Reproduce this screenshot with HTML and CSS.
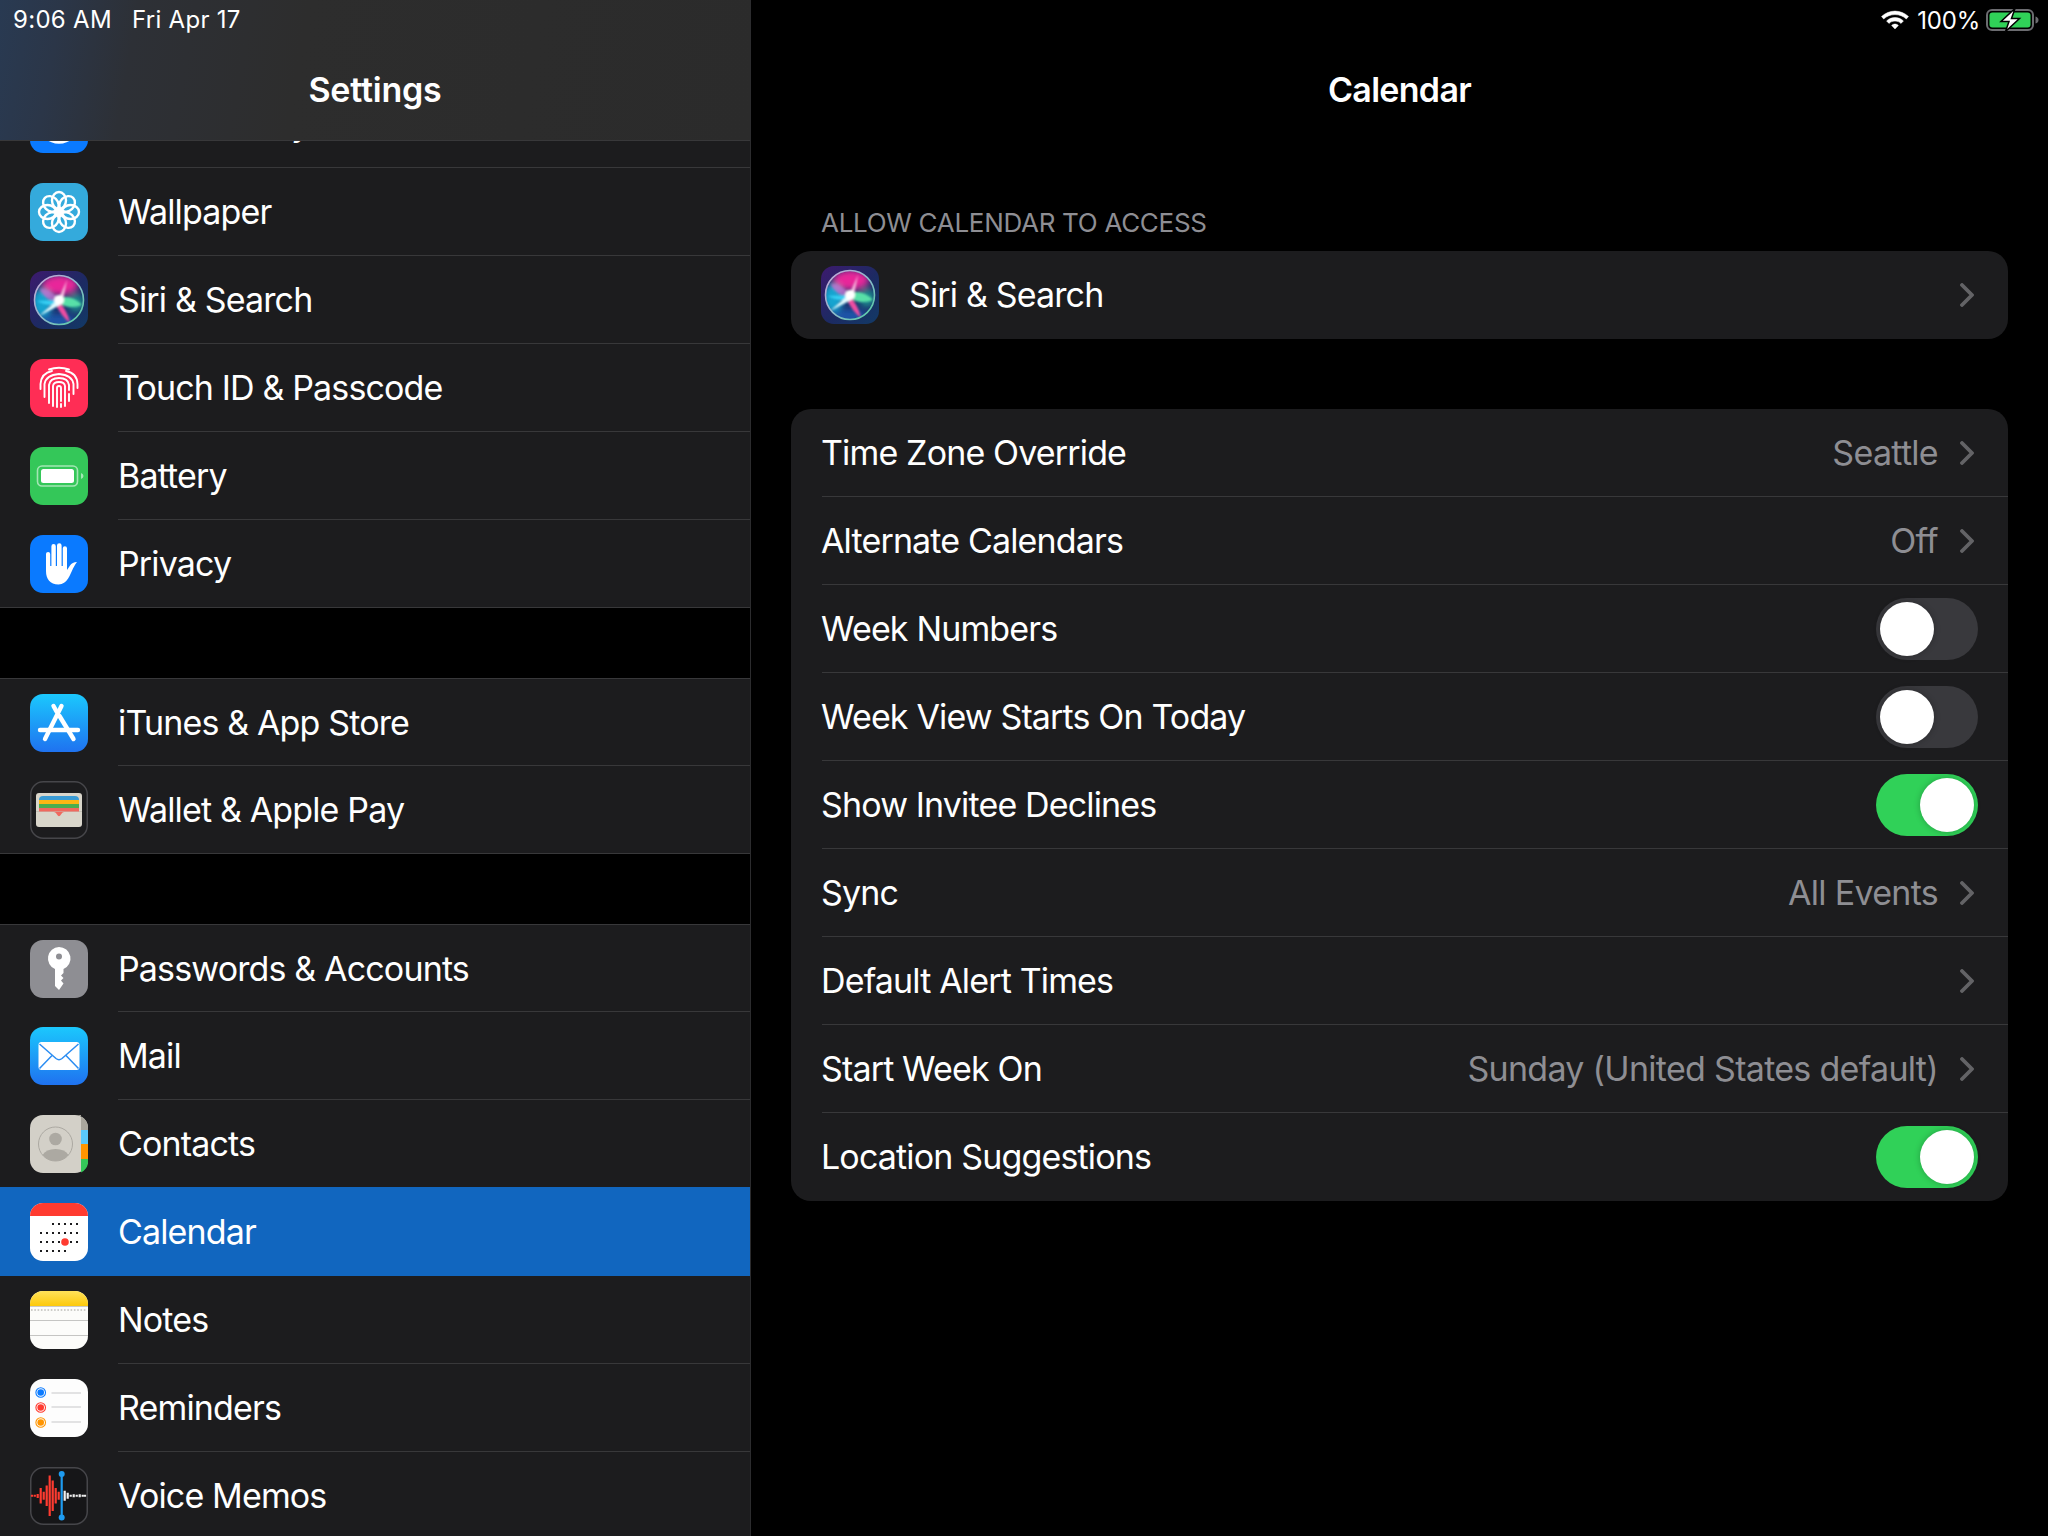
FILE: index.html
```html
<!DOCTYPE html>
<html lang="en">
<head>
<meta charset="utf-8">
<title>Settings - Calendar</title>
<link rel="stylesheet" href="styles.css">
</head>
<body>
<svg class="defs" width="0" height="0" aria-hidden="true">
  <defs>
    <linearGradient id="siriBg" x1="0" y1="0" x2="1" y2="1">
      <stop offset="0" stop-color="#3d1a6e"/><stop offset=".55" stop-color="#1c2a62"/><stop offset="1" stop-color="#123a66"/>
    </linearGradient>
    <linearGradient id="siriRing" x1="0" y1="0" x2="1" y2="1">
      <stop offset="0" stop-color="#c9a4d8"/><stop offset=".5" stop-color="#8fb8cc"/><stop offset="1" stop-color="#4fd0a0"/>
    </linearGradient>
    <filter id="soft" x="-40%" y="-40%" width="180%" height="180%"><feGaussianBlur stdDeviation="3"/></filter>
    <filter id="softer" x="-40%" y="-40%" width="180%" height="180%"><feGaussianBlur stdDeviation="1"/></filter>
    <clipPath id="siriClip"><circle cx="29" cy="29" r="24.500"/></clipPath>
    <linearGradient id="appstore" x1="0" y1="0" x2="0" y2="1">
      <stop offset="0" stop-color="#1bc8fd"/><stop offset="1" stop-color="#1f72f0"/>
    </linearGradient>
    <linearGradient id="notesTop" x1="0" y1="0" x2="0" y2="1">
      <stop offset="0" stop-color="#ffe25a"/><stop offset="1" stop-color="#fdc90a"/>
    </linearGradient>
    <symbol id="siri" viewBox="0 0 58 58">
      <rect width="58" height="58" rx="13" fill="url(#siriBg)"/>
      <circle cx="29" cy="29" r="24.500" fill="#1a2f6c"/>
      <g clip-path="url(#siriClip)">
        <g filter="url(#soft)">
          <ellipse cx="30" cy="14" rx="18" ry="10" fill="#e8289a"/>
          <ellipse cx="12" cy="32" rx="10" ry="14" fill="#18a4d0"/>
          <ellipse cx="28" cy="50" rx="17" ry="7" fill="#1c55a8"/>
          <ellipse cx="46" cy="32" rx="8" ry="9" fill="#1c8c8c"/>
        </g>
        <g filter="url(#softer)">
          <path d="M29 27Q17 17 10 18Q15 30 28 31Z" fill="#c070d0" opacity=".75"/>
          <path d="M28 27Q42 23 52 34Q40 39 28 32Z" fill="#58e0a8"/>
          <path d="M27 28Q37 38 40 52Q31 45 25 32Z" fill="#ee4ea2"/>
          <path d="M27 31L37 9L33 29Z" fill="#f4b8dc"/>
          <path d="M30 26L29 29L7 30Q20 37 30 32Z" fill="#38d0f4"/>
          <path d="M33 24L9 45L30 34Z" fill="#e2fcff"/>
          <circle cx="29" cy="29" r="5" fill="#fff"/>
        </g>
      </g>
      <circle cx="29" cy="29" r="24.500" fill="none" stroke="url(#siriRing)" stroke-width="1.600"/>
    </symbol>
  </defs>
</svg>

<main class="screen">
  <aside class="sidebar">
    <header class="side-head">
      <div class="status-left"><span>9:06 AM</span><span>Fri Apr 17</span></div>
      <h1 class="nav-title">Settings</h1>
    </header>
    <div class="side-scroll">
      <ul class="group group-first">
        <li class="item">
          <svg class="icon" viewBox="0 0 58 58"><rect width="58" height="58" rx="13" fill="#0a7aff"/><circle cx="29" cy="29" r="18" fill="none" stroke="#fff" stroke-width="3.500"/></svg>
          <span class="item-label">Accessibility</span>
        </li>
        <li class="item">
          <svg class="icon" viewBox="0 0 58 58"><rect width="58" height="58" rx="13" fill="#34aadc"/>
            <g fill="none" stroke="#fff" stroke-width="2.400">
              <g>
                <ellipse cx="29" cy="17.500" rx="7" ry="8.500"/><ellipse cx="29" cy="40.500" rx="7" ry="8.500"/>
                <ellipse cx="17.500" cy="29" rx="8.500" ry="7"/><ellipse cx="40.500" cy="29" rx="8.500" ry="7"/>
              </g>
              <g transform="rotate(45 29 29)">
                <ellipse cx="29" cy="17.500" rx="7" ry="8.500"/><ellipse cx="29" cy="40.500" rx="7" ry="8.500"/>
                <ellipse cx="17.500" cy="29" rx="8.500" ry="7"/><ellipse cx="40.500" cy="29" rx="8.500" ry="7"/>
              </g>
            </g>
            <circle cx="29" cy="29" r="3.600" fill="#fff"/></svg>
          <span class="item-label">Wallpaper</span>
        </li>
        <li class="item">
          <svg class="icon"><use href="#siri"/></svg>
          <span class="item-label">Siri &amp; Search</span>
        </li>
        <li class="item">
          <svg class="icon" viewBox="0 0 58 58"><rect width="58" height="58" rx="13" fill="#ff2d55"/>
            <g fill="none" stroke="#fff" stroke-width="1.900" stroke-linecap="round">
              <path d="M19 10.500Q29 7 39 10.500"/>
              <path d="M10.500 30V25Q11.500 14 22 12M36 12Q47 14 47.500 25V29"/>
              <path d="M14.500 38V25Q16 16 29 15Q42 16 43.500 25V35"/>
              <path d="M19 44V26Q20 19 29 19Q38 19 39 26V31M39 35V42"/>
              <path d="M23 47V27Q23.500 23 29 23Q34.500 23 35 27V47"/>
              <path d="M27 48V29Q27 27 29 27Q31 27 31 29V42M31 45V48"/>
            </g></svg>
          <span class="item-label">Touch ID &amp; Passcode</span>
        </li>
        <li class="item">
          <svg class="icon" viewBox="0 0 58 58"><rect width="58" height="58" rx="13" fill="#34c759"/>
            <rect x="7.500" y="19" width="40" height="20" rx="4.500" fill="none" stroke="#fff" stroke-opacity=".55" stroke-width="1.600"/>
            <rect x="11" y="22" width="33" height="14" rx="2.500" fill="#fff"/>
            <path d="M51 26Q53.500 27 53.500 29Q53.500 31 51 32Z" fill="#fff" fill-opacity=".55"/></svg>
          <span class="item-label">Battery</span>
        </li>
        <li class="item">
          <svg class="icon" viewBox="0 0 58 58"><rect width="58" height="58" rx="13" fill="#0a7aff"/>
            <path d="M16 19a2.100 2.100 0 0 1 4.200 0V31h1.200V11.300a2.200 2.200 0 0 1 4.400 0V31H27V10.600a2.300 2.300 0 0 1 4.600 0V31h1.200V13.300a2.100 2.100 0 0 1 4.200 0V35l3-4.500c1.500-2.200 3.800-3.500 7-3.500-.8 1.200-2.500 3.500-4 6.500-3 6-5.500 16-14.500 16C20 49.500 16 44 16 36Z" fill="#fff"/></svg>
          <span class="item-label">Privacy</span>
        </li>
      </ul>

      <ul class="group">
        <li class="item">
          <svg class="icon" viewBox="0 0 58 58"><rect width="58" height="58" rx="13" fill="url(#appstore)"/>
            <g stroke="#fff" stroke-width="4.400" stroke-linecap="round" fill="none">
              <path d="M31.500 12L15 45"/><path d="M29.500 22L43.500 45"/><path d="M23.500 12L26.500 17.500"/><path d="M10 36H48"/>
            </g></svg>
          <span class="item-label">iTunes &amp; App Store</span>
        </li>
        <li class="item">
          <svg class="icon" viewBox="0 0 58 58"><rect x=".75" y=".75" width="56.500" height="56.500" rx="12.500" fill="#1c1c1e" stroke="#46464a" stroke-width="1.500"/>
            <rect x="6" y="12" width="46" height="34" rx="3" fill="#d9d6cb"/>
            <path d="M9 19a4 4 0 0 1 4-4H45a4 4 0 0 1 4 4v2H9Z" fill="#3a9bd4"/>
            <rect x="9" y="19" width="40" height="5" fill="#fdb714"/>
            <rect x="9" y="23" width="40" height="5" fill="#4cae4f"/>
            <rect x="9" y="27" width="40" height="4" fill="#f0695f"/>
            <path d="M6 30H52V31H6Z" fill="#c4c1b6"/>
            <path d="M9 30.500H49V31H34Q32 31 31 33.500Q29 37 27 33.500Q26 31 24 31H9Z" fill="#f0695f"/></svg>
          <span class="item-label">Wallet &amp; Apple Pay</span>
        </li>
      </ul>

      <ul class="group">
        <li class="item">
          <svg class="icon" viewBox="0 0 58 58"><rect width="58" height="58" rx="13" fill="#8e8e93"/>
            <path d="M29 7a11.500 11.500 0 0 1 4.500 22.100V33l-2.500 2.500 2.500 2.500-2.500 2.500 2.500 3-4.500 6.500-4-4V29.100A11.500 11.500 0 0 1 29 7Z" fill="#fff"/>
            <circle cx="29" cy="16.500" r="3" fill="#8e8e93"/></svg>
          <span class="item-label">Passwords &amp; Accounts</span>
        </li>
        <li class="item">
          <svg class="icon" viewBox="0 0 58 58"><rect width="58" height="58" rx="13" fill="url(#appstore)"/>
            <rect x="8.500" y="15" width="41" height="28" rx="3" fill="#fff"/>
            <path d="M9.500 17L26 31.500Q29 34 32 31.500L48.500 17M9.500 41.500L22.500 28M48.500 41.500L35.500 28" fill="none" stroke="#2b8df2" stroke-width="1.500"/></svg>
          <span class="item-label">Mail</span>
        </li>
        <li class="item">
          <svg class="icon" viewBox="0 0 58 58"><rect width="58" height="58" rx="13" fill="#d3d0c8"/>
            <path d="M51 0H45A13 13 0 0 1 58 13V15H51Z" fill="#a9a69d"/>
            <rect x="51" y="15" width="7" height="14" fill="#5ac8fa"/>
            <rect x="51" y="29" width="7" height="15" fill="#ff9500"/>
            <path d="M51 44H58V45A13 13 0 0 1 51 57.500Z" fill="#34c759"/>
            <circle cx="25.500" cy="29" r="17" fill="none" stroke="#aca9a2" stroke-width="1"/>
            <circle cx="25.500" cy="24" r="6.300" fill="#aca9a2"/>
            <path d="M12.500 40Q16 34 25.500 34Q35 34 38.500 40A17 17 0 0 1 12.500 40Z" fill="#aca9a2"/></svg>
          <span class="item-label">Contacts</span>
        </li>
        <li class="item item-selected">
          <svg class="icon" viewBox="0 0 58 58"><rect width="58" height="58" rx="13" fill="#fff"/>
            <path d="M13 0H45A13 13 0 0 1 58 13V13H0V13A13 13 0 0 1 13 0Z" fill="#ff3b30"/>
            <g fill="#1c1c1e">
              <rect x="22" y="20" width="2" height="2"/><rect x="28" y="20" width="2" height="2"/><rect x="34" y="20" width="2" height="2"/><rect x="40" y="20" width="2" height="2"/><rect x="46" y="20" width="2" height="2"/>
              <rect x="10" y="29" width="2" height="2"/><rect x="16" y="29" width="2" height="2"/><rect x="22" y="29" width="2" height="2"/><rect x="28" y="29" width="2" height="2"/><rect x="34" y="29" width="2" height="2"/><rect x="40" y="29" width="2" height="2"/><rect x="46" y="29" width="2" height="2"/>
              <rect x="10" y="38" width="2" height="2"/><rect x="16" y="38" width="2" height="2"/><rect x="22" y="38" width="2" height="2"/><rect x="28" y="38" width="2" height="2"/><rect x="40" y="38" width="2" height="2"/><rect x="46" y="38" width="2" height="2"/>
              <rect x="10" y="47" width="2" height="2"/><rect x="16" y="47" width="2" height="2"/><rect x="22" y="47" width="2" height="2"/><rect x="28" y="47" width="2" height="2"/><rect x="34" y="47" width="2" height="2"/>
            </g>
            <circle cx="35" cy="39" r="3.800" fill="#ff3b30"/></svg>
          <span class="item-label">Calendar</span>
        </li>
        <li class="item">
          <svg class="icon" viewBox="0 0 58 58"><rect width="58" height="58" rx="13" fill="#fcfcfa"/>
            <path d="M13 0H45A13 13 0 0 1 58 13V15H0V13A13 13 0 0 1 13 0Z" fill="url(#notesTop)"/>
            <path d="M0 15.500H58" stroke="#c9c9c5" stroke-width="1"/>
            <path d="M1 19H57" stroke="#bdbdb9" stroke-width="1.500" stroke-dasharray="1.600 1.700"/>
            <path d="M0 29.500H58M0 44.500H58" stroke="#c5c5c3" stroke-width="1"/></svg>
          <span class="item-label">Notes</span>
        </li>
        <li class="item">
          <svg class="icon" viewBox="0 0 58 58"><rect width="58" height="58" rx="13" fill="#fdfdfd"/>
            <g fill="none" stroke-width="1.100"><circle cx="10.700" cy="13.500" r="4.800" stroke="#0a7aff"/><circle cx="10.700" cy="28.500" r="4.800" stroke="#ff3b30"/><circle cx="10.700" cy="43.500" r="4.800" stroke="#ff9500"/></g>
            <circle cx="10.700" cy="13.500" r="3.300" fill="#0a7aff"/><circle cx="10.700" cy="28.500" r="3.300" fill="#ff3b30"/><circle cx="10.700" cy="43.500" r="3.300" fill="#ff9500"/>
            <path d="M21.500 14H51M21.500 28H51M21.500 43H51" stroke="#c7c7c9" stroke-width="1"/></svg>
          <span class="item-label">Reminders</span>
        </li>
        <li class="item">
          <svg class="icon" viewBox="0 0 58 58"><rect x=".75" y=".75" width="56.500" height="56.500" rx="12.500" fill="#161618" stroke="#46464a" stroke-width="1.500"/>
            <path d="M2 27.800V29.800M4.800 27.800V29.800M7.700 27V31M10.700 21V36.500M13.700 24.700V32.800M16.700 18.500V39M19.700 8.500V49M22.700 13.500V44M25.700 21V36.500M28.700 24.700V32.800" stroke="#ff3b30" stroke-width="2.200" fill="none"/>
            <path d="M34.700 23.700V33.800M37.700 25.700V31.800M40.700 27.800V29.800M43.700 27.300V30.300M46.700 27.800V29.800M49.700 27.300V30.300M52.700 27.800V29.800M55 27.800V29.800" stroke="#f0f0f0" stroke-width="2.200" fill="none"/>
            <path d="M31.700 7V51" stroke="#1e9bf0" stroke-width="2.200"/>
            <circle cx="31.700" cy="7" r="3" fill="#1e9bf0"/><circle cx="31.700" cy="50.600" r="3" fill="#1e9bf0"/></svg>
          <span class="item-label">Voice Memos</span>
        </li>
      </ul>
    </div>
  </aside>

  <section class="detail">
    <div class="status-right">
      <svg class="wifi" viewBox="1 2.500 26 17.500"><path d="M14 3C9 3 5 5 1.500 8L3.500 10.300C6.300 7.700 10 6.200 14 6.200S21.700 7.700 24.500 10.300L26.500 8C23 5 19 3 14 3ZM14 9C11 9 8.300 10.100 6.200 12.100L8.400 14.400C9.900 13 11.800 12.200 14 12.200S18.100 13 19.600 14.400L21.800 12.100C19.700 10.100 17 9 14 9ZM14 15C12.800 15 11.700 15.500 10.900 16.300L14 19.500 17.100 16.300C16.300 15.500 15.200 15 14 15Z" fill="#fff" stroke="#fff" stroke-width=".5"/></svg>
      <span>100%</span>
      <svg class="batt" viewBox="0 0 54 24"><rect x="1" y="2" width="46" height="20" rx="5" fill="none" stroke="#6c6c70" stroke-width="2"/><rect x="3.500" y="4.500" width="41" height="15" rx="3" fill="#30d158"/><path d="M49.500 8.500Q52.500 9.500 52.500 12T49.500 15.500Z" fill="#6c6c70"/><path d="M29 0.500L15 13.500H23L19.500 23.500L33.500 10.500H25.500Z" fill="#fff" stroke="#000" stroke-width="1.500"/></svg>
    </div>
    <h2 class="nav-title detail-title">Calendar</h2>
    <h3 class="section-label">ALLOW CALENDAR TO ACCESS</h3>
    <div class="card">
      <div class="row row-icon">
        <svg class="icon"><use href="#siri"/></svg>
        <span class="row-label">Siri &amp; Search</span>
        <svg class="chev" viewBox="0 0 14 24"><path d="M2 2L12 12L2 22"/></svg>
      </div>
    </div>
    <div class="card card-main">
      <div class="row"><span class="row-label">Time Zone Override</span><span class="row-value">Seattle</span><svg class="chev" viewBox="0 0 14 24"><path d="M2 2L12 12L2 22"/></svg></div>
      <div class="row"><span class="row-label">Alternate Calendars</span><span class="row-value">Off</span><svg class="chev" viewBox="0 0 14 24"><path d="M2 2L12 12L2 22"/></svg></div>
      <div class="row"><span class="row-label">Week Numbers</span><span class="switch"></span></div>
      <div class="row"><span class="row-label">Week View Starts On Today</span><span class="switch"></span></div>
      <div class="row"><span class="row-label">Show Invitee Declines</span><span class="switch switch-on"></span></div>
      <div class="row"><span class="row-label">Sync</span><span class="row-value">All Events</span><svg class="chev" viewBox="0 0 14 24"><path d="M2 2L12 12L2 22"/></svg></div>
      <div class="row"><span class="row-label">Default Alert Times</span><svg class="chev" viewBox="0 0 14 24"><path d="M2 2L12 12L2 22"/></svg></div>
      <div class="row"><span class="row-label">Start Week On</span><span class="row-value">Sunday (United States default)</span><svg class="chev" viewBox="0 0 14 24"><path d="M2 2L12 12L2 22"/></svg></div>
      <div class="row"><span class="row-label">Location Suggestions</span><span class="switch switch-on"></span></div>
    </div>
  </section>
</main>
</body>
</html>
```

FILE: styles.css
```css
* { box-sizing: border-box; }
html, body { margin: 0; padding: 0; background: #000; }
body { font-family: Inter, "Liberation Sans", sans-serif; color: #fff; }
.defs { position: absolute; }

.screen { display: flex; width: 2048px; height: 1536px; overflow: hidden; background: #000; }

/* Sidebar */
.sidebar { position: relative; flex: 0 0 751px; height: 1536px; overflow: hidden; border-right: 1px solid #2c2c2e; }
.side-head {
  position: absolute; top: 0; left: 0; right: 0; height: 141px; z-index: 2;
  background: linear-gradient(100deg, #293a52 0, #2b3648 8%, #2d3036 18%, #2d2d2d 40%, #2b2b2b 100%);
  border-bottom: 1px solid #38383a;
}
.status-left { display: flex; gap: 20px; padding: 7px 0 0 13px; font-size: 24px; line-height: 26px; letter-spacing: .3px; }
.nav-title { margin: 0; font-size: 34px; line-height: 42px; font-weight: 600; text-align: center; letter-spacing: -.7px; }
.side-head .nav-title { margin-top: 36px; letter-spacing: -.2px; }
.side-scroll { padding-top: 80px; }
.group { list-style: none; margin: 0 0 70px; padding: 0; background: #1c1c1e; border-top: 1px solid #38383a; }
.group-first { border-top: 0; }
.item { position: relative; display: flex; align-items: center; gap: 30px; height: 88px; padding-left: 30px; }
.item::after { content: ""; position: absolute; bottom: 0; left: 118px; right: 0; height: 1px; background: #38383a; }
.item:last-child::after { left: 0; }
.group:not(.group-first) .item:first-child { height: 87px; }
.item-selected { height: 89px; margin-top: -1px; background: #1166bf; }
.item-selected::after { display: none; }
.icon { flex: 0 0 58px; width: 58px; height: 58px; display: block; }
.item-label, .row-label { font-size: 34px; line-height: 42px; letter-spacing: -.85px; white-space: nowrap; }

/* Detail */
.detail { flex: 1; position: relative; padding: 69px 40px 0; }
.status-right { position: absolute; top: 7px; right: 8px; display: flex; align-items: center; gap: 8px; height: 26px; font-size: 24px; letter-spacing: -.2px; }
.wifi { width: 28px; height: 20px; margin-top: -1px; }
.batt { width: 54px; height: 24px; margin-left: -2px; }
.detail-title { margin: 0; }
.section-label { margin: 95px 0 0 30px; font-size: 26px; line-height: 34px; font-weight: 400; color: #8e8e93; letter-spacing: -.3px; }
.card { margin-top: 11px; background: #1c1c1e; border-radius: 20px; overflow: hidden; }
.card-main { margin-top: 70px; }
.row { position: relative; display: flex; align-items: center; height: 88px; padding: 0 34px 0 30px; }
.row + .row::before { content: ""; position: absolute; top: -1px; left: 31px; right: 0; height: 1px; background: #38383a; }
.row-icon { gap: 30px; }
.row-label { margin-right: auto; }
.row-value { font-size: 34px; line-height: 42px; letter-spacing: -.7px; color: #8e8e93; margin-right: 22px; white-space: nowrap; }
.chev { width: 14px; height: 24px; fill: none; stroke: #636366; stroke-width: 3.800; stroke-linecap: round; stroke-linejoin: round; }
.switch { position: relative; display: block; width: 102px; height: 62px; margin-right: -4px; border-radius: 31px; background: #39393d; }
.switch::after { content: ""; position: absolute; top: 4px; left: 4px; width: 54px; height: 54px; border-radius: 50%; background: #fff; box-shadow: 0 0 6px rgba(0,0,0,.25); }
.switch-on { background: #30d158; }
.switch-on::after { left: 44px; }
```
